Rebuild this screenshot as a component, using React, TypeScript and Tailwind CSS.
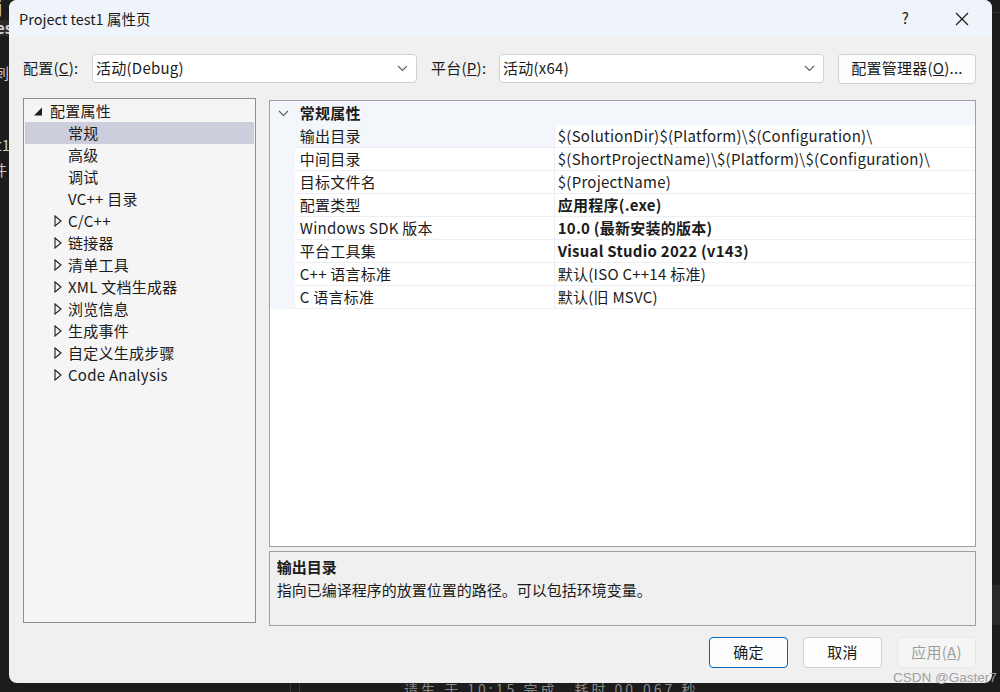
import React from "react";

const font = "font-['Noto_Sans_CJK_SC','Noto_Sans',sans-serif]";

function Chevron({ className = "" }: { className?: string }) {
  return (
    <svg width="11" height="7" viewBox="0 0 11 7" className={className}>
      <path d="M1 1 L5.5 5.5 L10 1" fill="none" stroke="#5f5f5f" strokeWidth="1.1" />
    </svg>
  );
}

function Combo({ text }: { text: React.ReactNode }) {
  return (
    <div className="flex h-[29px] w-[325px] items-center justify-between rounded-[4px] border border-[#d1d1d1] bg-white pl-[3px] pr-[8px] text-[15px] text-[#1b1b1b]">
      <span>{text}</span>
      <Chevron />
    </div>
  );
}

function FilledTri() {
  return (
    <svg width="9" height="9" viewBox="0 0 9 9">
      <polygon points="8,0.5 8,8.5 0,8.5" fill="#1e1e1e" />
    </svg>
  );
}

function HollowTri() {
  return (
    <svg width="8" height="12" viewBox="0 0 8 12">
      <polygon points="1,1 7,6 1,11" fill="none" stroke="#1e1e1e" strokeWidth="1.1" />
    </svg>
  );
}

type TreeItem = { label: string; level: 0 | 1 | 2; kind: "open" | "closed" | "leaf"; selected?: boolean };

const tree: TreeItem[] = [
  { label: "配置属性", level: 0, kind: "open" },
  { label: "常规", level: 1, kind: "leaf", selected: true },
  { label: "高级", level: 1, kind: "leaf" },
  { label: "调试", level: 1, kind: "leaf" },
  { label: "VC++ 目录", level: 1, kind: "leaf" },
  { label: "C/C++", level: 1, kind: "closed" },
  { label: "链接器", level: 1, kind: "closed" },
  { label: "清单工具", level: 1, kind: "closed" },
  { label: "XML 文档生成器", level: 1, kind: "closed" },
  { label: "浏览信息", level: 1, kind: "closed" },
  { label: "生成事件", level: 1, kind: "closed" },
  { label: "自定义生成步骤", level: 1, kind: "closed" },
  { label: "Code Analysis", level: 1, kind: "closed" },
];

type Prop = { name: string; value: string; bold?: boolean; selected?: boolean };
const props: Prop[] = [
  { name: "输出目录", value: "$(SolutionDir)$(Platform)\\$(Configuration)\\", selected: true },
  { name: "中间目录", value: "$(ShortProjectName)\\$(Platform)\\$(Configuration)\\" },
  { name: "目标文件名", value: "$(ProjectName)" },
  { name: "配置类型", value: "应用程序(.exe)", bold: true },
  { name: "Windows SDK 版本", value: "10.0 (最新安装的版本)", bold: true },
  { name: "平台工具集", value: "Visual Studio 2022 (v143)", bold: true },
  { name: "C++ 语言标准", value: "默认(ISO C++14 标准)" },
  { name: "C 语言标准", value: "默认(旧 MSVC)" },
];

export default function App() {
  return (
    <div className={`relative h-[692px] w-[1000px] overflow-hidden bg-[#1c1c1c] ${font}`}>
      {/* background editor fragments */}
      <div className="absolute left-0 top-[20px] h-[16px] w-[20px] bg-[#2a2a2a]" />
      <div className="absolute left-[-2px] top-[-4px] text-[15px] text-[#d4d4d4]">j</div>
      <div className="absolute left-[-4px] top-[17px] text-[15px] font-bold text-[#d4d4d4]">es</div>
      <div className="absolute left-[-6px] top-[62px] text-[15px] text-[#c8c8c8]">刺</div>
      <div className="absolute left-[-4px] top-[134px] text-[15px] text-[#c8c8c8]">t1</div>
      <div className="absolute left-[-8px] top-[159px] text-[15px] text-[#c8c8c8]">件</div>
      <div className="absolute left-[290px] top-[682px] h-[12px] w-px bg-[#3a3a3a]" />
      <div className="absolute left-[299px] top-[682px] h-[12px] w-px bg-[#3a3a3a]" />
      <div className="absolute left-[404px] top-[679px] text-[14px] tracking-[3px] text-[#8a8a8a]">
        请生 于 10:15 完成，耗时 00.067 秒
      </div>
      <div className="absolute left-[992px] top-[12px] h-px w-[8px] bg-[#333]" />
      <div className="absolute left-[992px] top-[585px] h-[40px] w-[8px] bg-[#2a2a2a]" />

      {/* dialog */}
      <div className="relative z-10 ml-[9px] flex h-[683px] w-[983px] flex-col overflow-hidden rounded-[8px] bg-[#f0f0f0] tracking-[0.25px] text-[#1b1b1b]">
        {/* title bar */}
        <div className="flex h-[37px] shrink-0 items-center bg-[#eef4f9] pl-[10px]">
          <span className="text-[14.5px] tracking-normal text-[#1b1b1b]">Project test1 属性页</span>
          <div className="ml-auto flex items-center">
            <span className="mr-[46px] text-[15px]">?</span>
            <svg width="14" height="14" viewBox="0 0 14 14" className="mr-[23px]">
              <path d="M1 1 L13 13 M13 1 L1 13" stroke="#1b1b1b" strokeWidth="1.2" />
            </svg>
          </div>
        </div>

        {/* config row */}
        <div className="mt-[17px] flex h-[29px] items-center pl-[14px] text-[15px]">
          <span className="w-[69px]">
            配置(<u>C</u>):
          </span>
          <Combo text="活动(Debug)" />
          <span className="ml-[14px] w-[68px]">
            平台(<u>P</u>):
          </span>
          <Combo text="活动(x64)" />
          <div className="ml-[14px] flex h-[30px] w-[138px] items-center justify-center rounded-[4px] border border-[#d0d0d0] bg-[#fdfdfd]">
            配置管理器(<u>O</u>)...
          </div>
        </div>

        {/* main area */}
        <div className="flex pl-[14px] pr-[16px]">
          {/* tree */}
          <div className="mt-[15px] h-[525px] w-[233px] border border-[#8a8e96] bg-[#f5f5f5] px-px pt-px">
            {tree.map((t) => (
              <div
                key={t.label}
                className={`flex h-[22px] items-center text-[15px] ${t.selected ? "bg-[#cccedb]" : ""}`}
              >
                {t.level === 0 ? (
                  <div className="flex w-[25px] justify-end pr-[7px]">
                    <FilledTri />
                  </div>
                ) : (
                  <div className="w-[25px]" />
                )}
                {t.level === 0 ? (
                  <span>{t.label}</span>
                ) : (
                  <>
                    <div className="flex w-[18px] items-center pl-[4px]">
                      {t.kind === "closed" ? <HollowTri /> : null}
                    </div>
                    <span>{t.label}</span>
                  </>
                )}
              </div>
            ))}
          </div>

          {/* right side */}
          <div className="ml-[13px] flex w-[708px] flex-col">
            <div className="mt-[17px] h-[447px] border border-[#a0a0a0] bg-white">
              <div className="flex h-[24px] items-center bg-[#f3f6fa] text-[15px] font-bold">
                <div className="flex w-[25px] justify-center pl-[3px]">
                  <Chevron />
                </div>
                <span className="pl-[5px]">常规属性</span>
              </div>
              <div className="flex">
                <div className="w-[25px] bg-[#f3f6fa]" />
                <div className="flex-1">
                  {props.map((p) => (
                    <div key={p.name} className="flex h-[23px] border-b border-[#eceef2] text-[15px]">
                      <div className={`flex w-[259px] items-center pl-[5px] ${p.selected ? "bg-[#f3f6fa]" : ""}`}>
                        {p.name}
                      </div>
                      <div className={`flex flex-1 items-center border-l border-[#eceef2] pl-[3px] ${p.bold ? "font-bold" : ""}`}>
                        {p.value}
                      </div>
                    </div>
                  ))}
                </div>
              </div>
            </div>
            <div className="mt-[4px] h-[75px] border border-[#a0a0a0] bg-[#f0f0f0] px-[7px] pt-[3px] text-[15px] tracking-normal">
              <div className="h-[23px] font-bold leading-[23px]">输出目录</div>
              <div className="h-[23px] leading-[23px]">指向已编译程序的放置位置的路径。可以包括环境变量。</div>
            </div>
          </div>
        </div>

        {/* buttons */}
        <div className="mt-[11px] flex justify-end gap-[15px] pr-[16px] text-[15px]">
          <div className="flex h-[31px] w-[79px] items-center justify-center rounded-[4px] border border-[#0067c0] bg-[#fdfdfd]">
            确定
          </div>
          <div className="flex h-[31px] w-[79px] items-center justify-center rounded-[4px] border border-[#d0d0d0] bg-[#fdfdfd]">
            取消
          </div>
          <div className="flex h-[31px] w-[79px] items-center justify-center rounded-[4px] border border-[#e8e8e8] bg-[#f5f5f5] text-[#9d9d9d]">
            应用(<u>A</u>)
          </div>
        </div>
      </div>

      {/* watermark */}
      <div className="absolute left-[893px] top-[668px] z-20 font-['Liberation_Sans',sans-serif] text-[13.5px] text-[#a0a0a0]">
        CSDN @Gaster7
      </div>
    </div>
  );
}
